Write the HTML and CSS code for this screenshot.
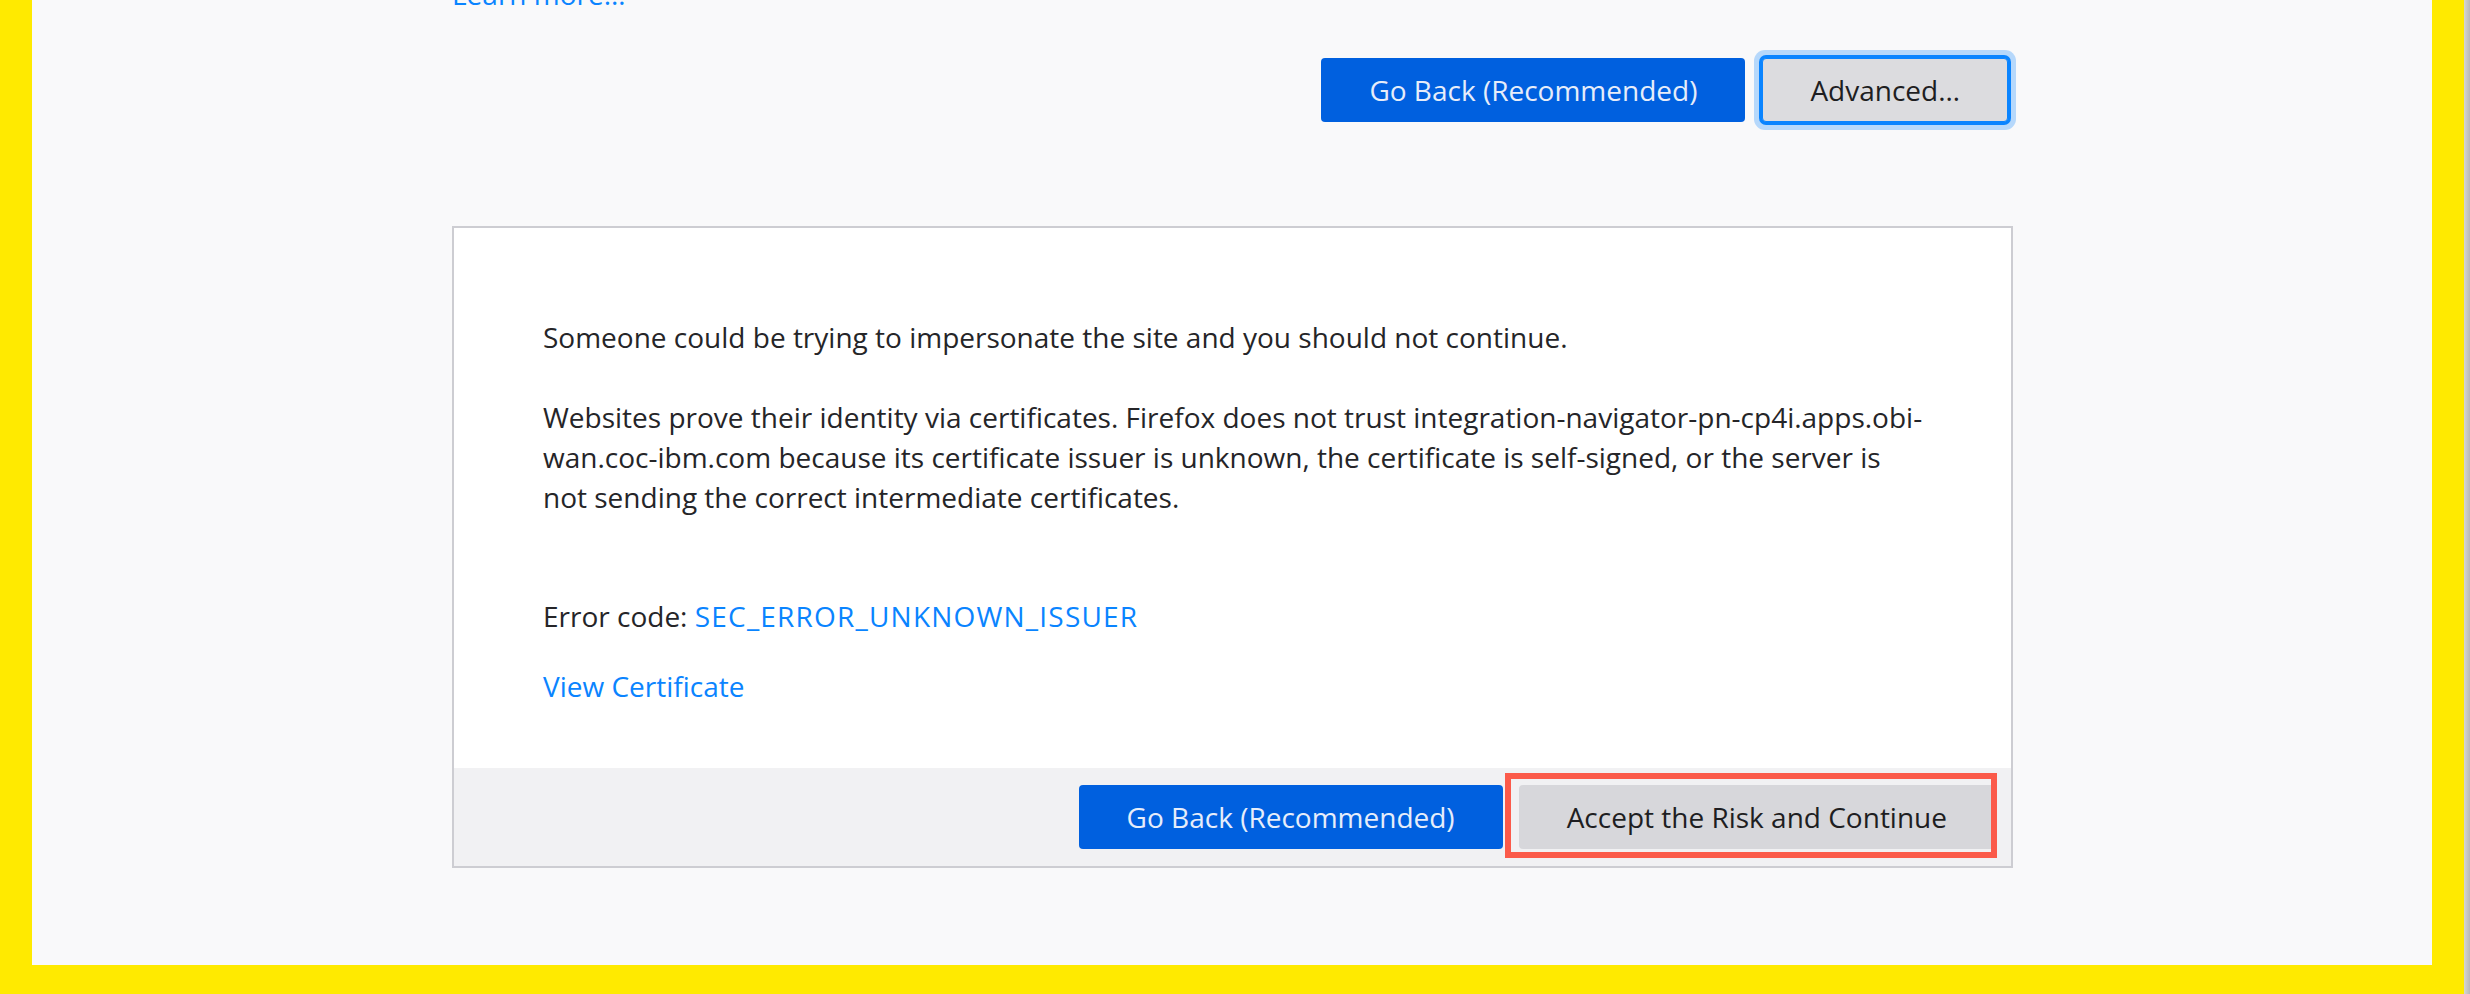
FILE: index.html
```html
<!DOCTYPE html>
<html lang="en">
<head>
<meta charset="utf-8">
<title>Warning: Potential Security Risk Ahead</title>
<link rel="stylesheet" href="styles.css">
</head>
<body>
  <div class="frame">
    <div class="page">
      <div class="column">
        <p class="learn"><a class="link" href="#">Learn more…</a></p>
        <div class="button-row">
          <button class="btn btn-primary" type="button">Go Back (Recommended)</button>
          <button class="btn btn-secondary btn-focused" type="button">Advanced…</button>
        </div>
        <div class="advanced-panel">
          <div class="panel-body">
            <p class="para">Someone could be trying to impersonate the site and you should not continue.</p>
            <p class="para">Websites prove their identity via certificates. Firefox does not trust integration-navigator-pn-cp4i.apps.obi-wan.coc-ibm.com because its certificate issuer is unknown, the certificate is self-signed, or the server is not sending the correct intermediate certificates.</p>
            <p class="error-code">Error code: <a class="link code-link" href="#">SEC_ERROR_UNKNOWN_ISSUER</a></p>
            <p class="view-cert"><a class="link" href="#">View Certificate</a></p>
          </div>
          <div class="panel-footer">
            <button class="btn btn-primary" type="button">Go Back (Recommended)</button>
            <button class="btn btn-secondary btn-accept" type="button">Accept the Risk and Continue</button>
          </div>
        </div>
      </div>
    </div>
  </div>
  <div class="edge"></div>
</body>
</html>
```
FILE: styles.css
```css
html, body {
  margin: 0;
  padding: 0;
}

body {
  width: 2470px;
  height: 994px;
  overflow: hidden;
  display: flex;
  background: #ffea00;
  font-family: "Open Sans", "Noto Sans", sans-serif;
  color: #252528;
}

.frame {
  flex: 1;
  padding: 0 32px 29px 32px;
}

.page {
  height: 965px;
  background: #f9f9fa;
  overflow: hidden;
}

.edge {
  width: 6px;
  background: linear-gradient(to right, #d6d6d0, #b8b8b8);
}

.column {
  margin-left: 420px;
  width: 1561px;
}

.learn {
  margin: -26px 0 0;
  font-size: 28px;
  line-height: 40px;
}

.link {
  color: #0a84ff;
  text-decoration: none;
}

.code-link {
  letter-spacing: 1.2px;
}

.button-row {
  margin-top: 44px;
  display: flex;
  justify-content: flex-end;
  gap: 17px;
  padding-right: 5px;
}

.btn {
  height: 64px;
  padding: 0 48px;
  border: none;
  border-radius: 4px;
  font-family: "Open Sans", "Noto Sans", sans-serif;
  font-size: 28px;
  line-height: 40px;
  white-space: nowrap;
}

.btn-primary {
  background: #0060df;
  color: #e6edfa;
}

.btn-secondary {
  background: #dcdcdf;
  color: #1e1e22;
}

.btn-focused {
  padding: 0 47px;
  border: 1px solid #0a84ff;
  box-shadow: 0 0 0 3px #0a84ff, 0 0 0 8px rgba(10, 132, 255, 0.28);
}

.advanced-panel {
  margin-top: 104px;
  background: #ffffff;
  border: 2px solid #cdcdd2;
}

.panel-body {
  padding: 89px 80px 62px 89px;
}

.panel-body p {
  margin: 0;
  font-size: 28px;
  line-height: 40px;
  width: 1385px;
}

.para + .para {
  margin-top: 40px;
}

.error-code {
  margin-top: 79px !important;
}

.view-cert {
  margin-top: 30px !important;
}

.panel-footer {
  height: 98px;
  box-sizing: border-box;
  padding: 0 16px 0 0;
  background: #f1f1f3;
  display: flex;
  align-items: center;
  justify-content: flex-end;
  gap: 16px;
}

.btn-accept {
  position: relative;
  background: #d7d7db;
}

.btn-accept::after {
  content: "";
  position: absolute;
  left: -14px;
  top: -12px;
  width: 492px;
  height: 85px;
  box-sizing: border-box;
  border: 6px solid #fb5a4a;
  pointer-events: none;
}
```
